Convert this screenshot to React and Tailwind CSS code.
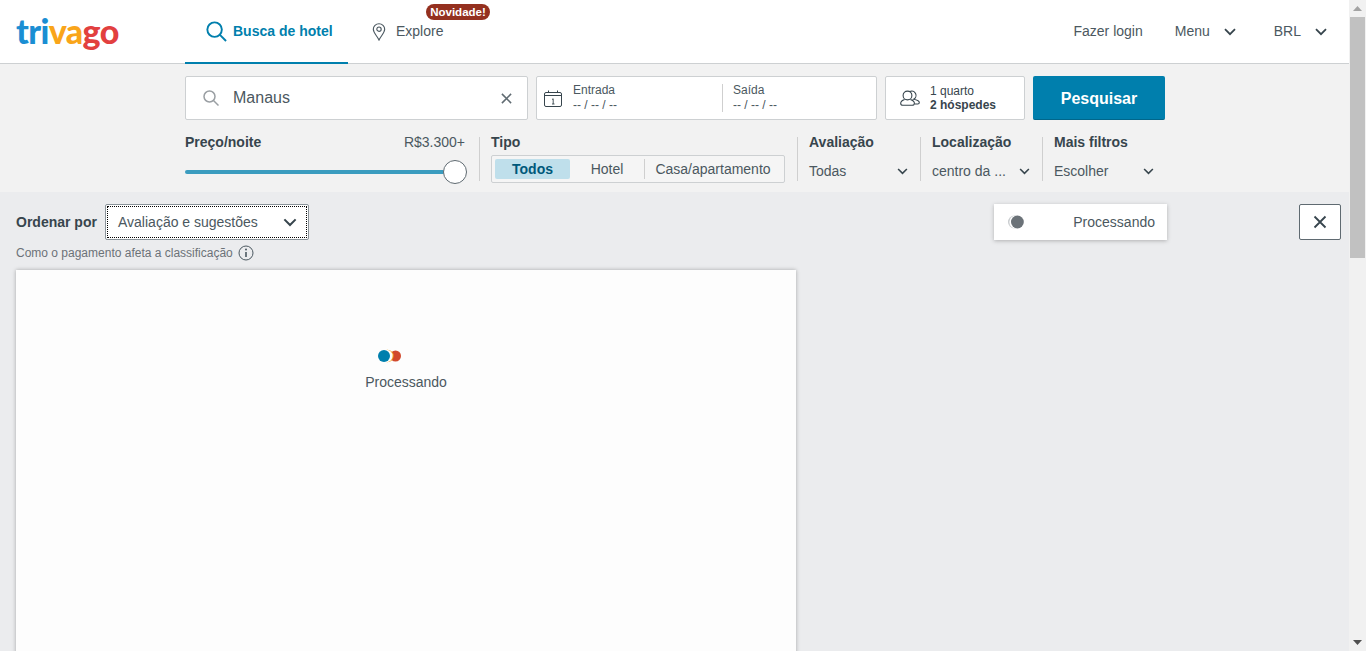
import React from "react";

const Chevron = ({ className = "w-3 h-2" }) => (
  <svg viewBox="0 0 12 8" className={className} fill="none" stroke="#37454d" strokeWidth="1.8">
    <path d="M1 1.2 6 6.2 11 1.2" />
  </svg>
);

const Separator = () => <div className="w-px h-[44px] mt-[3px] bg-[#cfcfcf]" />;

const FilterSelect = ({ title, value, chevronGap }) => (
  <div className="flex flex-col pl-[11px]">
    <span className="font-bold text-[14px] leading-4 text-[#37454d]">{title}</span>
    <div className="flex items-center mt-[13px] text-[14px] leading-4 text-[#4b5860]">
      <span>{value}</span>
      <Chevron className={`w-[11px] h-[7px] ${chevronGap}`} />
    </div>
  </div>
);

const App = () => {
  return (
    <div className="flex h-[651px] overflow-hidden bg-[#ebecee] font-['Liberation_Sans',Arial,sans-serif] text-[#37454d]">
      <div className="flex-1 flex flex-col min-w-0">
        {/* top nav */}
        <header className="h-[64px] shrink-0 bg-white border-b border-[#cdd0d2] flex">
          <div className="w-[185px] pl-4 pt-[9px]">
            <span className="font-['Lato',sans-serif] font-black text-[34px] leading-[44px] tracking-[-0.6px]">
              <span className="text-[#1a8ed3]">tri</span>
              <span className="text-[#f9a51a]">va</span>
              <span className="text-[#e2403f]">go</span>
            </span>
          </div>
          <div className="w-[163px] h-[64px] border-b-2 border-[#007fad] flex items-center pl-[21px]">
            <svg viewBox="0 0 22 22" className="w-[21px] h-[21px]" fill="none" stroke="#007fad" strokeWidth="2">
              <circle cx="9" cy="9" r="7.6" />
              <path d="M14.6 14.6 21 21" />
            </svg>
            <span className="ml-[6px] font-bold text-[14px] text-[#007fad]">Busca de hotel</span>
          </div>
          <div className="relative flex items-center pl-[24px]">
            <svg viewBox="0 0 14 19" className="w-[14px] h-[18px] mt-[1px]" fill="none" stroke="#4b5860" strokeWidth="1.2">
              <path d="M7 18 C5 13.5 1 10.5 1 6.6 A6 5.8 0 0 1 13 6.6 C13 10.5 9 13.5 7 18Z" />
              <circle cx="7" cy="6.5" r="2.3" />
            </svg>
            <span className="ml-[10px] text-[14px] text-[#4b5860] -mt-[1px]">Explore</span>
            <span className="absolute left-[78px] top-[4px] w-[64px] h-[16px] rounded-full bg-[#94301f] text-white font-bold text-[11.5px] leading-4 text-center">
              Novidade!
            </span>
          </div>
          <div className="ml-auto flex items-center text-[14px] text-[#4b5860]">
            <span>Fazer login</span>
            <span className="ml-[32px]">Menu</span>
            <Chevron className="w-[12px] h-[8px] ml-[14px]" />
            <span className="ml-[38px]">BRL</span>
            <Chevron className="w-[12px] h-[8px] ml-[14px] mr-[22px]" />
          </div>
        </header>

        {/* search area */}
        <section className="h-[128px] shrink-0 bg-[#f2f2f2] pl-[185px] pt-[12px]">
          <div className="flex gap-2 h-[44px]">
            <div className="w-[343px] bg-white border border-[#cdd0d2] rounded-[2px] flex items-center pl-[17px] pr-[15px]">
              <svg viewBox="0 0 16 16" className="w-[16px] h-[16px]" fill="none" stroke="#9a9fa3" strokeWidth="1.5">
                <circle cx="6.5" cy="6.5" r="5.5" />
                <path d="M10.5 10.5 15.5 15.5" />
              </svg>
              <span className="ml-[14px] text-[16px] text-[#4b5860]">Manaus</span>
              <svg viewBox="0 0 12 12" className="w-[11px] h-[11px] ml-auto" fill="none" stroke="#5f6a71" strokeWidth="1.7">
                <path d="M1 1 11 11M11 1 1 11" />
              </svg>
            </div>
            <div className="w-[341px] bg-white border border-[#cdd0d2] rounded-[2px] flex items-center pl-[7px]">
              <svg viewBox="0 0 18 17" className="w-[18px] h-[17px]" fill="none" stroke="#37454d" strokeWidth="1">
                <rect x="0.5" y="2.5" width="17" height="14" rx="1.5" />
                <path d="M0.5 5.5H17.5M4.5 0.5V2.5M13.5 0.5V2.5" />
                <path d="M8 9.5 9.2 8.8V14M8 14H10.5" strokeWidth="0.9" />
              </svg>
              <div className="ml-[11px] w-[149px] flex flex-col text-[12px] leading-[15px] text-[#4b5860]">
                <span>Entrada</span>
                <span>-- / -- / --</span>
              </div>
              <div className="w-px h-[28px] bg-[#cfcfcf]" />
              <div className="ml-[10px] flex flex-col text-[12px] leading-[15px] text-[#4b5860]">
                <span>Saída</span>
                <span>-- / -- / --</span>
              </div>
            </div>
            <div className="w-[140px] bg-white border border-[#cdd0d2] rounded-[2px] flex items-center pl-[14px]">
              <svg viewBox="0 0 20 16" className="w-[20px] h-[16px]" fill="none" stroke="#37454d" strokeWidth="1.1">
                <circle cx="7.5" cy="5.5" r="4.4" />
                <path d="M4.6 9.6C2.4 10.4 0.7 11.8 0.7 13.2 0.7 14.6 1.8 15.3 3 15.3H12C13.2 15.3 14.4 14.6 14.4 13.2 14.4 11.8 12.6 10.4 10.4 9.6" />
                <path d="M9.8 1.6A4.2 4.2 0 1 1 13.6 9.3C16.2 9.8 19.3 11 19.3 12.6 19.3 13.6 18.6 14 17.8 14H15" />
              </svg>
              <div className="ml-[10px] flex flex-col text-[12px] leading-[14px] text-[#37454d]">
                <span>1 quarto</span>
                <span className="font-bold">2 hóspedes</span>
              </div>
            </div>
            <button className="w-[132px] bg-[#007fad] border-b border-[#00668b] rounded-[2px] text-white font-bold text-[16px] pt-[2px]">
              Pesquisar
            </button>
          </div>

          <div className="flex mt-[14px] h-[49px]">
            <div className="w-[294px] pr-[14px] flex flex-col">
              <div className="flex justify-between">
                <span className="font-bold text-[14px] leading-4">Preço/noite</span>
                <span className="text-[14px] leading-4 text-[#4b5860]">R$3.300+</span>
              </div>
              <div className="relative mt-[10px] h-[24px] shrink-0 flex items-center">
                <div className="w-[260px] h-[4px] rounded-full bg-[#3b9cbf]" />
                <div className="absolute left-[258px] top-0 w-[24px] h-[24px] rounded-full bg-white border border-[#5f6a71]" />
              </div>
            </div>
            <Separator />
            <div className="w-[317px] pl-[11px] flex flex-col">
              <span className="font-bold text-[14px] leading-4">Tipo</span>
              <div className="mt-[5px] w-[294px] h-[28px] shrink-0 bg-[#f5f5f5] border border-[#cdd0d2] rounded-[2px] flex items-center px-[3px] text-[14px] text-[#4b5860]">
                <span className="w-[75px] h-[20px] rounded-[2px] bg-[#bfdfeb] text-[#00587a] font-bold leading-5 text-center">Todos</span>
                <span className="w-[74px] text-center">Hotel</span>
                <div className="w-px h-[20px] bg-[#cfcfcf]" />
                <span className="flex-1 text-center">Casa/apartamento</span>
              </div>
            </div>
            <Separator />
            <div className="w-[122px]">
              <FilterSelect title="Avaliação" value="Todas" chevronGap="ml-[51px]" />
            </div>
            <Separator />
            <div className="w-[121px]">
              <FilterSelect title="Localização" value="centro da ..." chevronGap="ml-[13px]" />
            </div>
            <Separator />
            <FilterSelect title="Mais filtros" value="Escolher" chevronGap="ml-[35px]" />
          </div>
        </section>

        {/* results */}
        <main className="flex-1 min-h-0 pl-4 pt-[12px] pr-[8px]">
          <div className="flex">
            <div className="flex flex-col w-[293px] shrink-0">
              <div className="flex items-center h-[36px]">
                <span className="w-[82px] shrink-0 font-bold text-[14px]">Ordenar por</span>
                <div className="ml-[7px] w-[204px] h-[36px] bg-white border border-[#8a9399] rounded-[2px] p-[1px]">
                  <div className="h-full border border-dotted border-black flex items-center pl-[10px] pr-[9px] text-[14px] text-[#4b5860]">
                    <span>Avaliação e sugestões</span>
                    <Chevron className="w-[14px] h-[9px] ml-auto" />
                  </div>
                </div>
              </div>
              <div className="flex items-center mt-[4px] h-[18px] text-[12px] text-[#6b7278]">
                <span>Como o pagamento afeta a classificação</span>
                <svg viewBox="0 0 16 16" className="w-[16px] h-[16px] ml-[5px]" fill="none" stroke="#4b5860" strokeWidth="1">
                  <circle cx="8" cy="8" r="7" />
                  <path d="M8 7V12" strokeWidth="1.6" />
                  <circle cx="8" cy="4.6" r="1" fill="#4b5860" stroke="none" />
                </svg>
              </div>
            </div>
            <div className="ml-[685px] w-[173px] shrink-0 h-[36px] bg-white shadow-[0_1px_4px_rgba(0,0,0,0.25)] flex items-center pl-[14px] pr-[12px] text-[14px] text-[#4b5860]">
              <svg viewBox="0 0 16 14" className="w-[16px] h-[14px]" stroke="none">
                <circle cx="6.4" cy="7" r="6.4" fill="#c9cccf" />
                <circle cx="8" cy="7" r="6.6" fill="#ffffff" />
                <circle cx="9.4" cy="7" r="6.4" fill="#6b7278" />
              </svg>
              <span className="ml-auto">Processando</span>
            </div>
            <button className="ml-[132px] w-[42px] shrink-0 h-[36px] bg-white border border-[#5f6a71] rounded-[2px] flex items-center justify-center">
              <svg viewBox="0 0 14 14" className="w-[14px] h-[14px]" fill="none" stroke="#37454d" strokeWidth="1.8">
                <path d="M1.5 1.5 12.5 12.5M12.5 1.5 1.5 12.5" />
              </svg>
            </button>
          </div>
          <div className="mt-[8px] w-[780px] h-[500px] bg-[#fdfdfd] shadow-[0_0_4px_rgba(0,0,0,0.3)] flex flex-col items-center pt-[79px]">
            <svg viewBox="0 0 24 14" className="w-[24px] h-[14px] mr-[33px]" stroke="none">
              <circle cx="17.5" cy="7" r="5.5" fill="#d1492d" />
              <circle cx="9.4" cy="7" r="6.2" fill="#f9a51a" />
              <circle cx="8.4" cy="7" r="6.2" fill="#fdfdfd" />
              <circle cx="6" cy="7" r="6" fill="#007fad" />
            </svg>
            <span className="mt-[11px] text-[14px] leading-4 text-[#4b5860]">Processando</span>
          </div>
        </main>
      </div>

      {/* browser scrollbar */}
      <div className="w-[17px] shrink-0 bg-[#f1f1f1] flex flex-col items-center">
        <svg viewBox="0 0 9 5" className="w-[9px] h-[5px] mt-[6px]" fill="#a3a3a3">
          <path d="M0 5 4.5 0 9 5Z" />
        </svg>
        <div className="w-[15px] h-[241px] mt-[6px] bg-[#c1c1c1]" />
        <svg viewBox="0 0 9 5" className="w-[9px] h-[5px] mt-auto mb-[6px]" fill="#505050">
          <path d="M0 0 4.5 5 9 0Z" />
        </svg>
      </div>
    </div>
  );
};

export default App;
